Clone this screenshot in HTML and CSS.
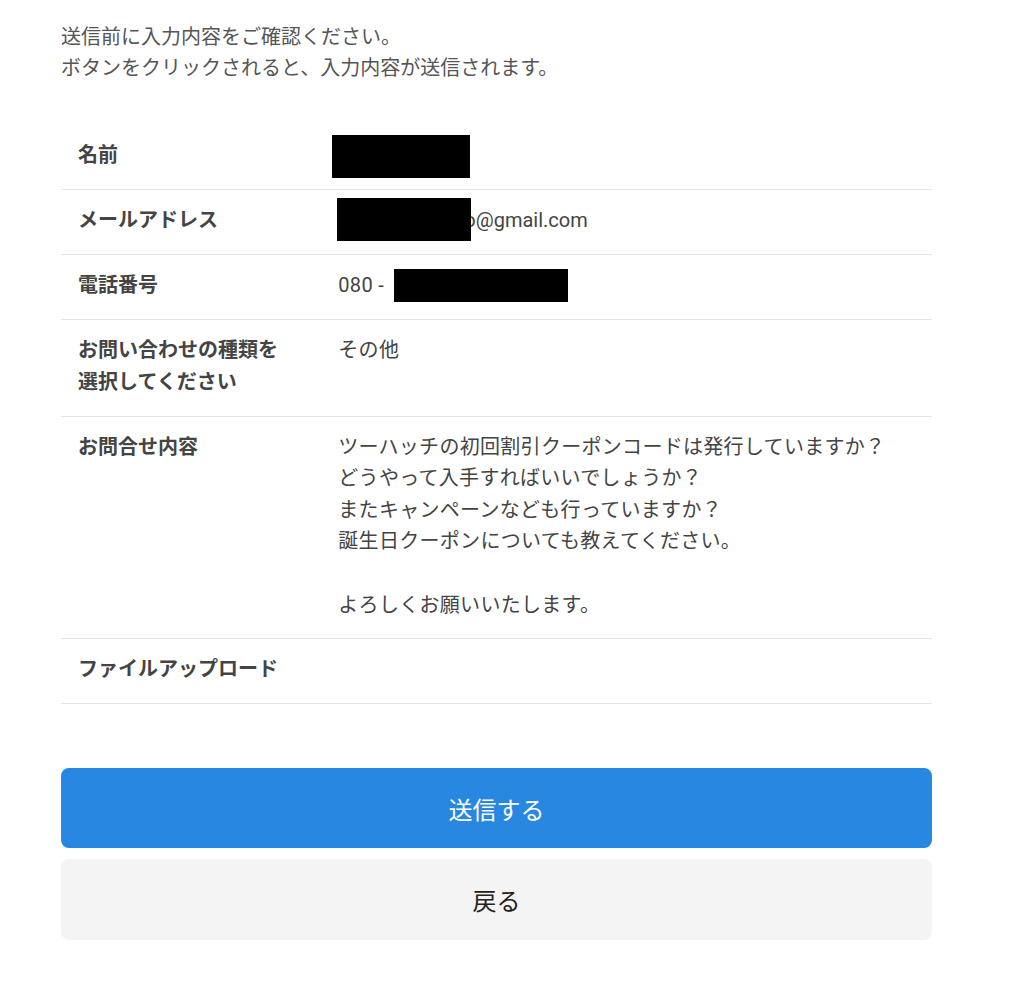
FILE: index.html
```html
<!DOCTYPE html>
<html lang="ja">
<head>
  <meta charset="utf-8">
  <meta name="viewport" content="width=device-width, initial-scale=1">
  <title>送信内容の確認</title>
  <link rel="stylesheet" href="styles.css">
</head>
<body>
  <div class="wrap">
    <p class="lead">送信前に入力内容をご確認ください。<br>ボタンをクリックされると、入力内容が送信されます。</p>

    <table class="confirm">
      <tr>
        <th>名前</th>
        <td><span class="mask mask-name"></span></td>
      </tr>
      <tr>
        <th>メールアドレス</th>
        <td><span class="mask mask-mail"></span><span class="mail">o@gmail.com</span></td>
      </tr>
      <tr>
        <th>電話番号</th>
        <td>080 - <span class="mask mask-tel"></span></td>
      </tr>
      <tr>
        <th>お問い合わせの種類を<br>選択してください</th>
        <td>その他</td>
      </tr>
      <tr>
        <th>お問合せ内容</th>
        <td>ツーハッチの初回割引クーポンコードは発行していますか？<br>どうやって入手すればいいでしょうか？<br>またキャンペーンなども行っていますか？<br>誕生日クーポンについても教えてください。<br><br>よろしくお願いいたします。</td>
      </tr>
      <tr>
        <th>ファイルアップロード</th>
        <td></td>
      </tr>
    </table>

    <div class="buttons">
      <button type="button" class="btn btn-send">送信する</button>
      <button type="button" class="btn btn-back">戻る</button>
    </div>
  </div>
</body>
</html>
```

FILE: styles.css
```css
body {
  margin: 0;
  background: #fff;
  font-family: Roboto, "Noto Sans CJK JP", sans-serif;
  color: #444;
}

.wrap {
  width: 871px;
  margin-left: 61px;
  padding-top: 22px;
}

.lead {
  margin: 0;
  font-size: 20px;
  line-height: 31px;
  color: #555;
}

.confirm {
  width: 100%;
  margin-top: 41px;
  border-collapse: collapse;
  font-size: 20px;
  line-height: 31.6px;
}

.confirm tr {
  border-bottom: 1px solid #e6e6e6;
}

.confirm th {
  width: 30%;
  padding: 15px 16px 17.4px 17px;
  text-align: left;
  vertical-align: top;
  font-weight: bold;
  color: #444;
}

.confirm td {
  padding: 15px 16px 17.4px 16px;
  vertical-align: top;
  color: #444;
  letter-spacing: 0.3px;
}

.mask {
  display: inline-block;
  background: #000;
  vertical-align: middle;
}

.mask-name {
  width: 138px;
  height: 43px;
  margin: -8px 0 -8px -6px;
}

.mask-mail {
  position: relative;
  z-index: 1;
  width: 134px;
  height: 43px;
  margin: -10px 0 -6px -1px;
}

.mail {
  margin-left: -7px;
  letter-spacing: 0;
}

.mask-tel {
  width: 174px;
  height: 33px;
  margin: -4px 0 -2px 5px;
}

.buttons {
  margin-top: 64px;
  display: flex;
  flex-direction: column;
  gap: 11px;
}

.btn {
  height: 80px;
  border: none;
  border-radius: 8px;
  font-family: "Noto Sans CJK JP", sans-serif;
  font-size: 24px;
  cursor: pointer;
}

.btn-send {
  background: #2887e0;
  color: #fff;
}

.btn-back {
  height: 81px;
  background: #f4f4f4;
  color: #222;
}
```
